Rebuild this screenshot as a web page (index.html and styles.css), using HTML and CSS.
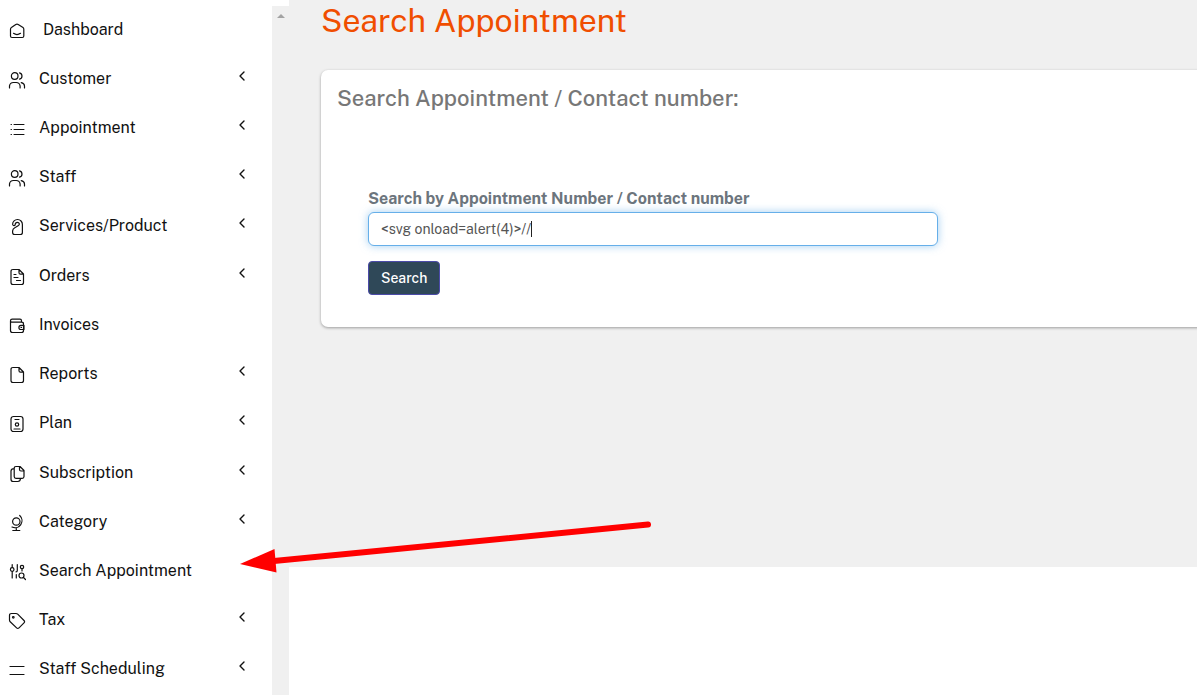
FILE: index.html
```html
<!DOCTYPE html>
<html lang="en">
<head>
<meta charset="utf-8">
<meta name="viewport" content="width=device-width, initial-scale=1">
<title>Search Appointment</title>
<link rel="stylesheet" href="styles.css">
</head>
<body>
<svg class="defs" aria-hidden="true">
  <symbol id="users" viewBox="0 0 18 18"><circle cx="6.7" cy="5" r="3.3"/><path d="M1.5 17v-2.2a4 4 0 0 1 4-3.3h2.6a4 4 0 0 1 4 3.3V17M11.5 1.8a3.3 3.3 0 0 1 0 6.4M13.2 11.6c2 .5 3.3 1.6 3.3 3.4v2"/></symbol>
  <symbol id="chevron" viewBox="0 0 8 10"><path d="M6 1 2 5l4 4"/></symbol>
</svg>
<div class="app">
  <nav class="sidebar" aria-label="Main">
    <a class="item home" href="#"><svg class="icon" viewBox="0 0 18 18"><path d="M2.5 7.2Q2.5 6.2 3.4 5.6L7.8 2.5Q9 1.8 10.2 2.5L15 5.6Q15.8 6.2 15.8 7.2V14Q15.8 15.5 14.3 15.5H4Q2.5 15.5 2.5 14ZM5.5 11.3Q9 13.8 12.5 11.3"/></svg><span>Dashboard</span></a>
    <a class="item" href="#"><svg class="icon"><use href="#users"/></svg><span>Customer</span><svg class="chevron"><use href="#chevron"/></svg></a>
    <a class="item" href="#"><svg class="icon thin" viewBox="0 0 18 18"><path d="M6 4.5h10M6 9.5h10M6 14.5h10M3 4.500h.5M3 9.500h.5M3 14.500h.5"/></svg><span>Appointment</span><svg class="chevron"><use href="#chevron"/></svg></a>
    <a class="item" href="#"><svg class="icon"><use href="#users"/></svg><span>Staff</span><svg class="chevron"><use href="#chevron"/></svg></a>
    <a class="item" href="#"><svg class="icon" viewBox="0 0 18 18"><path d="M4.600 6.300a4.900 4.900 0 0 1 9.800.2V14.500q0 2-2 2H6.600q-2 0-2-2V13c0-2.300 1.600-2.900 3-3.700L10.500 7.500c1.600-1.200.7-3.200-1-3.200S7.200 5.600 7.200 6.600 5.300 8.600 4.600 6.300"/></svg><span>Services/Product</span><svg class="chevron"><use href="#chevron"/></svg></a>
    <a class="item" href="#"><svg class="icon" viewBox="0 0 18 18"><path d="M5 1.500h6l4.500 4.500v8.500q0 2-2 2H5q-2 0-2-2V3.500q0-2 2-2M11 1.700v3q0 1.500 1.500 1.500h3M6 6.500h2M6 9.500h4M8.500 12.500h4"/></svg><span>Orders</span><svg class="chevron"><use href="#chevron"/></svg></a>
    <a class="item" href="#"><svg class="icon" viewBox="0 0 18 18"><path d="M13.500 4.700V3.800Q13.500 2.200 12 2.200H4.200Q2.500 2.200 2.500 3.700V13.500Q2.500 15.500 4.500 15.500H13.500Q15.500 15.500 15.500 13.500V7Q15.500 5.200 13.500 5.200H4.200Q2.500 5.200 2.500 3.700M16 8.300h-3a2.100 2.100 0 0 0 0 4.200h3ZM13 10.400h.5"/></svg><span>Invoices</span></a>
    <a class="item" href="#"><svg class="icon" viewBox="0 0 18 18"><path d="M5 1.500h6l4.500 4.500v8.500q0 2-2 2H5q-2 0-2-2V3.500q0-2 2-2M11 1.700v3q0 1.500 1.500 1.500h3"/></svg><span>Reports</span><svg class="chevron"><use href="#chevron"/></svg></a>
    <a class="item" href="#"><svg class="icon" viewBox="0 0 18 18"><rect x="3" y="1.500" width="12" height="15" rx="2.500"/><path d="M7 4.500h4M6 14h6"/><circle cx="9" cy="9.500" r="1.700"/></svg><span>Plan</span><svg class="chevron"><use href="#chevron"/></svg></a>
    <a class="item" href="#"><svg class="icon" viewBox="0 0 18 18"><path d="M8 1.500h4l4 4v6q0 1.800-1.800 1.800H8q-1.800 0-1.800-1.800V3.300Q6.200 1.500 8 1.500M11.500 1.700v2.800q0 1.500 1.500 1.500h3M6 3.700Q3 3.700 3 6v8.200q0 2.300 2.300 2.300h4.500q2.500 0 2.700-3"/></svg><span>Subscription</span><svg class="chevron"><use href="#chevron"/></svg></a>
    <a class="item" href="#"><svg class="icon" viewBox="0 0 18 18"><circle cx="8.300" cy="7.500" r="3.700"/><path d="M11.700 1.500A7 7 0 0 1 4 13M8.300 13.800v2.700M4.800 16.500h7"/></svg><span>Category</span><svg class="chevron"><use href="#chevron"/></svg></a>
    <a class="item" href="#"><svg class="icon" viewBox="0 0 18 18"><path d="M4.200 1.500v3M4.200 8.500V15M9.300 1.500v6q0 1.300-1.300 1.300M8.300 11.500V15M14 6v2"/><circle cx="4.200" cy="6.500" r="1.800"/><circle cx="14" cy="4" r="1.700"/><circle cx="13.500" cy="12.500" r="2.500"/><path d="m15.500 14.500 2 2"/></svg><span>Search Appointment</span></a>
    <a class="item" href="#"><svg class="icon" viewBox="0 0 18 18"><path d="M3.500 1.500H8q1 0 1.700.7l6.300 6.300q1.200 1.200 0 2.400l-5 5q-1.200 1.200-2.400 0L2.200 9.800Q1.500 9 1.500 8V3.500q0-2 2-2Z"/><circle cx="5.300" cy="5.300" r=".8"/></svg><span>Tax</span><svg class="chevron"><use href="#chevron"/></svg></a>
    <a class="item" href="#"><svg class="icon" viewBox="0 0 18 18"><path d="M2 5.500h14M2 13.500h14"/></svg><span>Staff Scheduling</span><svg class="chevron"><use href="#chevron"/></svg></a>
  </nav>
  <div class="track" aria-hidden="true"><svg viewBox="0 0 8 4"><path d="M0 4 4 0l4 4Z"/></svg></div>
  <main class="content">
    <h1>Search Appointment</h1>
    <section class="card">
      <h2>Search Appointment / Contact number:</h2>
      <form class="search">
        <label for="query">Search by Appointment Number / Contact number</label>
        <div class="field">
          <input id="query" type="text" value="&lt;svg onload=alert(4)&gt;//">
          <span class="caret"></span>
        </div>
        <button type="button">Search</button>
      </form>
    </section>
  </main>
</div>
<svg class="arrow" viewBox="0 0 412 54" aria-hidden="true"><path class="shaft" d="M408 4.500 34 41"/><path class="head" d="M0 44 34.500 29 36.500 52.500Z"/></svg>
</body>
</html>
```
FILE: styles.css
```css
* { box-sizing: border-box; }
body {
  margin: 0;
  background: #fff;
  font-family: "Public Sans", Inter, "Liberation Sans", sans-serif;
  color: #111;
}
.defs { position: absolute; width: 0; height: 0; }
.app { display: flex; min-height: 100vh; overflow: hidden; }
.sidebar {
  display: flex;
  flex-direction: column;
  flex: 0 0 272px;
  padding: 5px 25px 1px 8px;
}
.item {
  display: flex;
  flex: 1 0 40px;
  align-items: center;
  gap: 13px;
  font-size: 16px;
  line-height: 24px;
  color: #111;
  text-decoration: none;
}
.home { gap: 17px; }
.icon, .chevron {
  fill: none;
  stroke: #111;
  stroke-linecap: round;
  stroke-linejoin: round;
}
.icon { width: 18px; height: 18px; margin-top: 2px; stroke-width: 1.2; }
.thin { stroke-width: 1; }
.chevron {
  width: 8px;
  height: 10px;
  margin: 0 1px 6px auto;
  stroke-width: 1.4;
}
.track {
  flex: 0 0 17px;
  margin-top: 6px;
  padding-top: 7px;
  background: #f0f0f0;
  line-height: 0;
  text-align: center;
}
.track svg { width: 8px; height: 4px; fill: #a3a3a3; }
.content {
  flex: 1;
  align-self: flex-start;
  padding: 0 0 240px 32px;
  background: #f0f0f0;
}
h1, h2 { margin: 0; }
h1 { font-size: 32px; font-weight: 400; line-height: 42px; color: #f04e00; }
.card {
  margin: 28px -8px 0 0;
  padding: 15px 16px 16px;
  background: #fff;
  border-radius: 7px;
  box-shadow: 0 1px 3px rgba(0, 0, 0, .35);
}
h2 { font-size: 22px; font-weight: 500; line-height: 26px; color: #777; }
.search { padding: 77px 31px 16px; }
.search label {
  display: block;
  padding-bottom: 2px;
  font-size: 16px;
  font-weight: 700;
  line-height: 22px;
  color: #6c757d;
}
.field { position: relative; max-width: 570px; }
.field input {
  display: block;
  width: 100%;
  height: 34px;
  padding: 6px 12px;
  border: 1px solid #66afe9;
  border-radius: 6px;
  outline: 0;
  box-shadow: 0 0 8px rgba(102, 175, 233, .6);
  font: 14px/20px "Public Sans", Inter, sans-serif;
  color: #555;
}
.caret {
  position: absolute;
  left: 163px;
  top: 9px;
  width: 1px;
  height: 16px;
  background: #222;
}
.search button {
  height: 34px;
  margin-top: 15px;
  padding: 0 12px;
  border: 1px solid #4b4ba8;
  border-radius: 4px;
  background: #2f4858;
  font: 500 14px/20px "Public Sans", Inter, sans-serif;
  color: #fff;
}
.arrow { position: absolute; left: 240px; top: 520px; width: 412px; height: 54px; pointer-events: none; }
.shaft { fill: none; stroke: #f00; stroke-width: 6; stroke-linecap: round; }
.head { fill: #f00; }
```
